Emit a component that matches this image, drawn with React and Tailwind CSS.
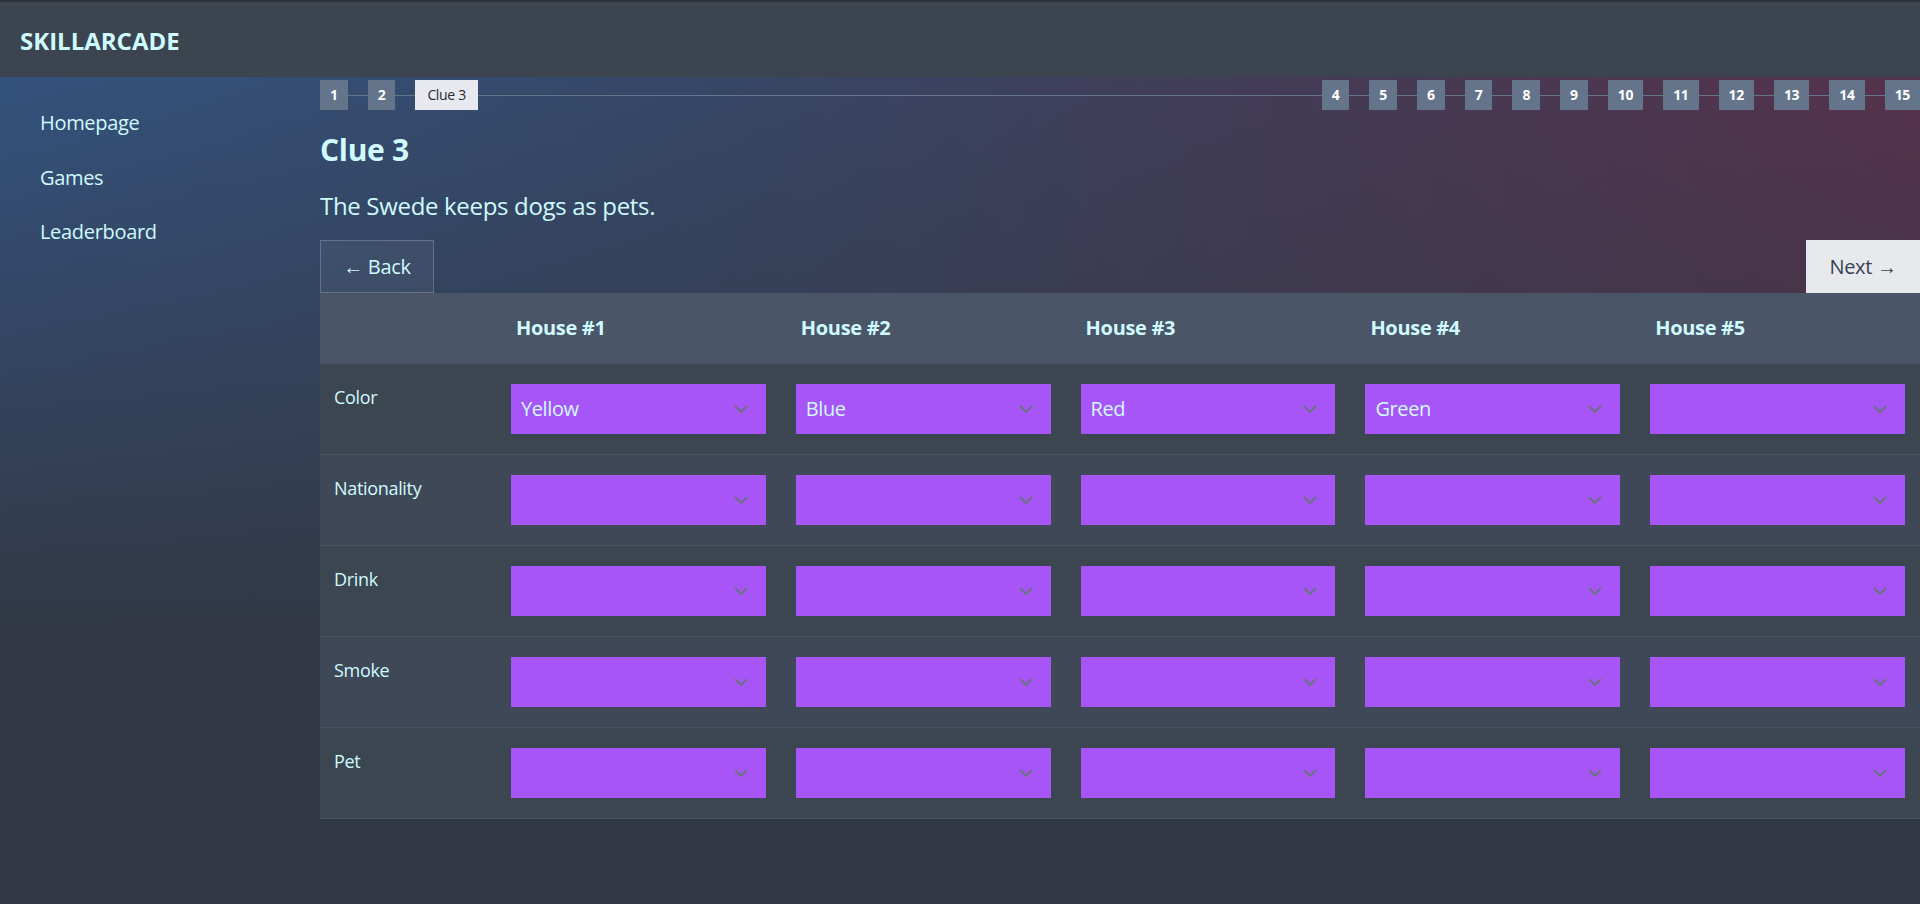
import { ChevronDown } from 'lucide-react';

const steps = ['1', '2', 'Clue 3', '4', '5', '6', '7', '8', '9', '10', '11', '12', '13', '14', '15'];
const current = 2;

const rows = [
  { label: 'Color', values: ['Yellow', 'Blue', 'Red', 'Green', ''] },
  { label: 'Nationality', values: ['', '', '', '', ''] },
  { label: 'Drink', values: ['', '', '', '', ''] },
  { label: 'Smoke', values: ['', '', '', '', ''] },
  { label: 'Pet', values: ['', '', '', '', ''] },
];

function Chevron() {
  return (
    <svg width="14" height="8" viewBox="0 0 14 8" fill="none" className="pointer-events-none absolute right-[18px] top-1/2 -translate-y-1/2">
      <path d="M1 1l6 6 6-6" stroke="#6b7280" strokeWidth="2" />
    </svg>
  );
}

function Select({ value }) {
  return (
    <div className="relative">
      <select
        value={value}
        onChange={() => {}}
        className="h-[50px] w-full appearance-none bg-[#a855f7] pl-2.5 pr-10 text-xl tracking-[-0.02em] text-[#cffafe] outline-none"
      >
        <option value=""></option>
        {['Yellow', 'Blue', 'Red', 'Green', 'White'].map((c) => (
          <option key={c} value={c}>{c}</option>
        ))}
      </select>
      <Chevron />
    </div>
  );
}

function Stepper() {
  return (
    <div className="relative mt-[3px] flex h-[30px] items-stretch gap-5">
      <div className="absolute inset-x-0 top-1/2 h-px bg-[#64748b]" />
      {steps.map((s, i) => (
        <div key={s} className={i === current + 1 ? 'relative ml-auto flex' : 'relative flex'}>
          {i === current ? (
            <span className="flex items-center bg-[#e8e9ee] px-3 text-sm text-[#1f2937]">{s}</span>
          ) : (
            <span className="flex items-center bg-[#64748b] px-2.5 text-sm font-bold text-white">{s}</span>
          )}
        </div>
      ))}
    </div>
  );
}

export default function App() {
  return (
    <div className="flex min-h-screen flex-col bg-[#323845] font-['Open_Sans',sans-serif] tracking-[-0.02em] text-[#cffafe]">
      <header className="flex h-[77px] shrink-0 items-center border-t-2 border-[#2c313a] bg-[#3c4450] px-5 pt-0.5">
        <span className="text-2xl font-bold tracking-normal">SKILLARCADE</span>
      </header>

      <div className="flex flex-1 bg-[linear-gradient(180deg,rgba(50,56,69,0)_0%,#323845_68%),linear-gradient(100deg,#34527d_0%,#364766_35%,#453a55_65%,#5a3049_100%)]">
        <aside className="w-80 shrink-0">
          <nav className="flex flex-col gap-[26.5px] pl-10 pt-8 text-xl leading-7">
            <a href="#">Homepage</a>
            <a href="#">Games</a>
            <a href="#">Leaderboard</a>
          </nav>
        </aside>

        <main className="flex min-w-0 flex-1 flex-col">
          <Stepper />

          <h1 className="mt-[22px] text-3xl font-bold leading-9">Clue 3</h1>
          <p className="mt-[22px] text-2xl leading-8">The Swede keeps dogs as pets.</p>

          <div className="mt-[18px] flex justify-between">
            <button className="flex h-[53px] w-[114px] items-center justify-center border border-white/20 bg-white/5 text-xl">
              ← Back
            </button>
            <button className="flex h-[53px] w-[114px] items-center justify-center bg-[#e8e9ec] text-xl text-[#374151]">
              Next →
            </button>
          </div>

          <div className="border-b border-[#475264]">
            <div className="grid h-[70px] grid-cols-[176px_repeat(5,minmax(0,1fr))] items-center bg-[#4a5568] text-xl font-bold">
              <div />
              {[1, 2, 3, 4, 5].map((n) => (
                <div key={n} className="px-5">House #{n}</div>
              ))}
            </div>
            {rows.map((row, r) => (
              <div
                key={row.label}
                className={`grid grid-cols-[176px_repeat(5,minmax(0,1fr))] border-t border-[#475264] py-5 ${r % 2 ? 'bg-[#3f4857]' : 'bg-[#3c4651]'}`}
              >
                <div className="px-3.5 text-lg leading-[27px]">{row.label}</div>
                {row.values.map((v, i) => (
                  <div key={i} className="px-[15px]">
                    <Select value={v} />
                  </div>
                ))}
              </div>
            ))}
          </div>
        </main>
      </div>
    </div>
  );
}
